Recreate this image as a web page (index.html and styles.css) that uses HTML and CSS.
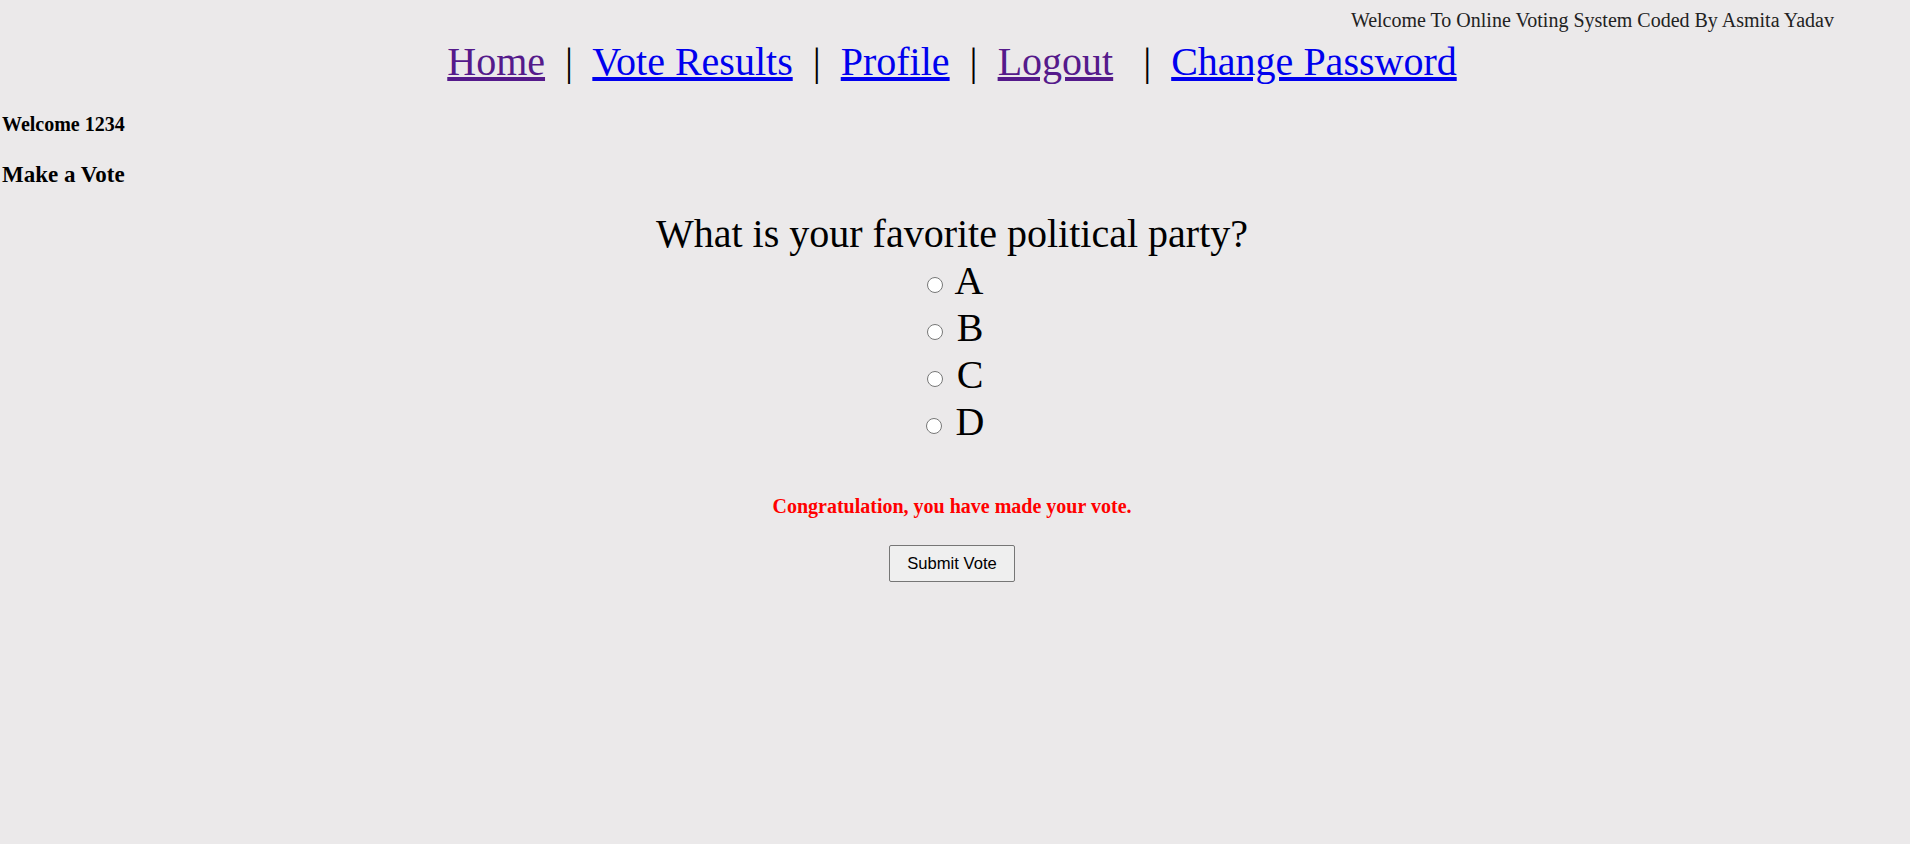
FILE: index.html
```
<!DOCTYPE html>
<html>
<head>
<meta charset="utf-8">
<title>Online Voting System</title>
<link rel="stylesheet" href="styles.css">
</head>
<body>
<div class="topbar">Welcome To Online Voting System Coded By Asmita Yadav</div>
<div class="page">
  <div class="nav"><a class="visited" href="#">Home</a> &nbsp;|&nbsp; <a href="#">Vote Results</a> &nbsp;|&nbsp; <a href="#">Profile</a> &nbsp;|&nbsp; <a class="visited" href="#">Logout</a> &nbsp;&nbsp;|&nbsp; <a href="#">Change Password</a></div>
  <h4 class="welcome">Welcome 1234</h4>
  <h3 class="make">Make a Vote</h3>
  <form class="vote">
    <div class="question">What is your favorite political party?</div>
    <div class="options">
      <label class="option"><input type="radio" name="party" value="A"> A</label>
      <label class="option"><input type="radio" name="party" value="B"> B</label>
      <label class="option"><input type="radio" name="party" value="C"> C</label>
      <label class="option"><input type="radio" name="party" value="D"> D</label>
    </div>
    <p class="msg">Congratulation, you have made your vote.</p>
    <button type="button" class="submit">Submit Vote</button>
  </form>
</div>
</body>
</html>
```
FILE: styles.css
```
html, body {
  margin: 0;
  padding: 0;
}
body {
  background: #ebe9ea;
  font-family: "Liberation Serif", "Times New Roman", serif;
  color: #000;
  min-height: 844px;
}
.topbar {
  text-align: right;
  padding: 9px 76px 0 0;
  font-size: 20px;
  line-height: 23px;
  color: #222;
}
.page {
  padding-right: 6px;
}
.nav {
  text-align: center;
  font-size: 40px;
  line-height: 46px;
  margin-top: 7px;
  white-space: nowrap;
}
.nav a {
  color: #0000ee;
}
.nav a.visited {
  color: #551a8b;
}
.welcome {
  font-size: 20px;
  line-height: 23px;
  margin: 28px 0 0 2px;
  font-weight: bold;
}
.make {
  font-size: 23px;
  line-height: 27px;
  margin: 25px 0 0 2px;
  font-weight: bold;
}
.vote {
  text-align: center;
  margin-top: 22px;
}
.question {
  font-size: 40px;
  line-height: 47px;
}
.options {
  display: flex;
  flex-direction: column;
  align-items: center;
}
.option {
  font-size: 40px;
  line-height: 47px;
}
.option input {
  width: 16px;
  height: 16px;
  margin: 0 4px 0 6px;
  vertical-align: 1px;
}
.msg {
  color: #ff0000;
  font-weight: bold;
  font-size: 20px;
  line-height: 23px;
  margin: 49.5px 0 0 0;
}
.submit {
  margin-top: 27.5px;
  font-family: Arial, "Liberation Sans", sans-serif;
  font-size: 16.6px;
  line-height: 19px;
  padding: 8px 17px;
  border: 1px solid #767676;
  border-radius: 2px;
  background: #efefef;
  color: #000;
}
```
